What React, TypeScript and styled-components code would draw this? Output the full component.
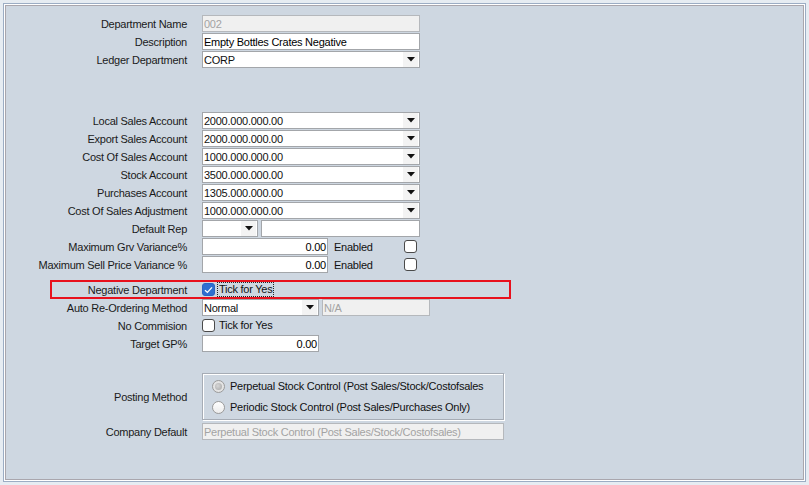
import React from "react";
import styled, { createGlobalStyle } from "styled-components";

const Global = createGlobalStyle`
  html, body { margin: 0; padding: 0; background: #e6ecf2; }
  body { font-family: "Liberation Sans", Arial, sans-serif; font-size: 11px; letter-spacing: -0.25px; color: #111; }
  * { box-sizing: border-box; }
`;

const Frame = styled.div`
  margin: 3px;
  width: 803px;
  height: 479px;
  border: 1px solid #9cadc4;
  padding: 1px;
  background: #ffffff;
`;

const Panel = styled.div`
  width: 100%;
  height: 100%;
  border: 1px solid #a9a6ad;
  background: #ced7e1;
  display: flex;
  flex-direction: column;
`;

const Section = styled.div<{ $top?: number }>`
  display: flex;
  flex-direction: column;
  gap: 1px;
  margin-top: ${(p) => p.$top ?? 0}px;
`;

const Row = styled.div<{ $h?: number }>`
  position: relative;
  display: grid;
  grid-template-columns: 181px 1fr;
  column-gap: 15px;
  align-items: center;
  height: ${(p) => p.$h ?? 17}px;
`;

const Label = styled.div`
  text-align: right;
  white-space: nowrap;
  color: #1a1a1a;
`;

const Cell = styled.div<{ $w?: number }>`
  display: flex;
  align-items: center;
  gap: 3px;
  height: 100%;
  width: ${(p) => (p.$w ? `${p.$w}px` : "auto")};
`;

const Input = styled.div<{ $w: number; $align?: string; $disabled?: boolean }>`
  width: ${(p) => p.$w}px;
  height: 17px;
  border: 1px solid ${(p) => (p.$disabled ? "#b5b8bc" : "#a3a6aa")};
  background: ${(p) => (p.$disabled ? "#f0f0f0" : "#ffffff")};
  color: ${(p) => (p.$disabled ? "#a3a3a3" : "#000")};
  display: flex;
  align-items: center;
  justify-content: ${(p) => (p.$align === "right" ? "flex-end" : "flex-start")};
  padding: 0 1px 0 1px;
  white-space: nowrap;
  overflow: hidden;
  flex-shrink: 0;
`;

const Combo = styled.div<{ $w: number }>`
  width: ${(p) => p.$w}px;
  height: 17px;
  border: 1px solid #a3a6aa;
  background: #fff;
  display: flex;
  align-items: center;
  flex-shrink: 0;
`;

const ComboText = styled.div`
  flex: 1;
  padding-left: 1px;
  white-space: nowrap;
  overflow: hidden;
`;

const ArrowBtn = styled.div`
  width: 15px;
  height: 15px;
  margin-right: 1px;
  background: #f3f3f3;
  display: flex;
  align-items: center;
  justify-content: center;
`;

const Enabled = styled.div`
  flex: 1;
  padding-left: 3px;
`;

const Box = styled.div<{ $checked?: boolean }>`
  width: 13px;
  height: 13px;
  border-radius: 3px;
  border: 1px solid ${(p) => (p.$checked ? "#2a64c4" : "#4a4a4a")};
  background: ${(p) => (p.$checked ? "#2f6fd0" : "#fff")};
  display: flex;
  align-items: center;
  justify-content: center;
  flex-shrink: 0;
`;

const Spacer = styled.div`
  width: 0;
  flex-shrink: 0;
`;

const CheckText = styled.div<{ $focus?: boolean }>`
  margin-left: -1px;
  padding: 0 1px;
  border: 1px ${(p) => (p.$focus ? "dotted #222" : "solid transparent")};
  line-height: 13px;
`;

const Highlight = styled.div`
  position: absolute;
  left: 44px;
  top: -1px;
  width: 461px;
  height: 19px;
  border: 2px solid #e8101c;
  pointer-events: none;
`;

const Group = styled.div`
  width: 302px;
  height: 47px;
  border: 1px solid #a6acb5;
  box-shadow: inset 1px 1px 0 #ffffff, 1px 1px 0 #ffffff;
  display: flex;
  flex-direction: column;
  justify-content: center;
  gap: 8px;
  padding-left: 9px;
`;

const RadioRow = styled.div`
  display: flex;
  align-items: center;
  gap: 5px;
  height: 13px;
`;

const Radio = styled.div<{ $selected?: boolean }>`
  width: 13px;
  height: 13px;
  border-radius: 50%;
  border: 1px solid #9a9a9a;
  background: ${(p) => (p.$selected ? "#e4e4e4" : "linear-gradient(#ffffff, #ececec)")};
  display: flex;
  align-items: center;
  justify-content: center;
`;

const Dot = styled.div`
  width: 7px;
  height: 7px;
  border-radius: 50%;
  background: radial-gradient(circle at 40% 40%, #d6d6d6, #a6a6a6);
`;

const Arrow = () => (
  <svg width="8" height="5" viewBox="0 0 8 5">
    <polygon points="0,0 8,0 4,4.5" fill="#111" />
  </svg>
);

const Check = () => (
  <svg width="9" height="8" viewBox="0 0 9 8">
    <path d="M1 4.2 L3.4 6.4 L8 1.4" stroke="#fff" strokeWidth="1.3" fill="none" />
  </svg>
);

const ComboField = ({ w, text }: { w: number; text: string }) => (
  <Combo $w={w}>
    <ComboText>{text}</ComboText>
    <ArrowBtn>
      <Arrow />
    </ArrowBtn>
  </Combo>
);

const accounts: [string, string][] = [
  ["Local Sales Account", "2000.000.000.00"],
  ["Export Sales Account", "2000.000.000.00"],
  ["Cost Of Sales Account", "1000.000.000.00"],
  ["Stock Account", "3500.000.000.00"],
  ["Purchases Account", "1305.000.000.00"],
  ["Cost Of Sales Adjustment", "1000.000.000.00"],
];

export default function App() {
  return (
    <>
      <Global />
      <Frame>
        <Panel>
          <Section $top={9}>
            <Row>
              <Label>Department Name</Label>
              <Cell>
                <Input $w={218} $disabled>002</Input>
              </Cell>
            </Row>
            <Row>
              <Label>Description</Label>
              <Cell>
                <Input $w={218}>Empty Bottles Crates Negative</Input>
              </Cell>
            </Row>
            <Row>
              <Label>Ledger Department</Label>
              <Cell>
                <ComboField w={218} text="CORP" />
              </Cell>
            </Row>
          </Section>

          <Section $top={44}>
            {accounts.map(([l, v]) => (
              <Row key={l}>
                <Label>{l}</Label>
                <Cell>
                  <ComboField w={218} text={v} />
                </Cell>
              </Row>
            ))}
            <Row>
              <Label>Default Rep</Label>
              <Cell>
                <ComboField w={56} text="" />
                <Input $w={159}></Input>
              </Cell>
            </Row>
            <Row>
              <Label>Maximum Grv Variance%</Label>
              <Cell $w={218}>
                <Input $w={126} $align="right">0.00</Input>
                <Enabled>Enabled</Enabled>
                <Box />
                <Spacer />
              </Cell>
            </Row>
            <Row>
              <Label>Maximum Sell Price Variance %</Label>
              <Cell $w={218}>
                <Input $w={126} $align="right">0.00</Input>
                <Enabled>Enabled</Enabled>
                <Box />
                <Spacer />
              </Cell>
            </Row>
          </Section>

          <Section $top={8}>
            <Row>
              <Highlight />
              <Label>Negative Department</Label>
              <Cell>
                <Box $checked>
                  <Check />
                </Box>
                <CheckText $focus>Tick for Yes</CheckText>
              </Cell>
            </Row>
            <Row>
              <Label>Auto Re-Ordering Method</Label>
              <Cell>
                <ComboField w={117} text="Normal" />
                <Input $w={108} $disabled>N/A</Input>
              </Cell>
            </Row>
            <Row>
              <Label>No Commision</Label>
              <Cell>
                <Box />
                <CheckText>Tick for Yes</CheckText>
              </Cell>
            </Row>
            <Row>
              <Label>Target GP%</Label>
              <Cell>
                <Input $w={117} $align="right">0.00</Input>
              </Cell>
            </Row>
          </Section>

          <Section $top={21}>
            <Row $h={47}>
              <Label>Posting Method</Label>
              <Cell>
                <Group>
                  <RadioRow>
                    <Radio $selected>
                      <Dot />
                    </Radio>
                    <span>Perpetual Stock Control (Post Sales/Stock/Costofsales</span>
                  </RadioRow>
                  <RadioRow>
                    <Radio />
                    <span>Periodic Stock Control (Post Sales/Purchases Only)</span>
                  </RadioRow>
                </Group>
              </Cell>
            </Row>
          </Section>

          <Section $top={3}>
            <Row>
              <Label>Company Default</Label>
              <Cell>
                <Input $w={302} $disabled>Perpetual Stock Control (Post Sales/Stock/Costofsales)</Input>
              </Cell>
            </Row>
          </Section>
        </Panel>
      </Frame>
    </>
  );
}
